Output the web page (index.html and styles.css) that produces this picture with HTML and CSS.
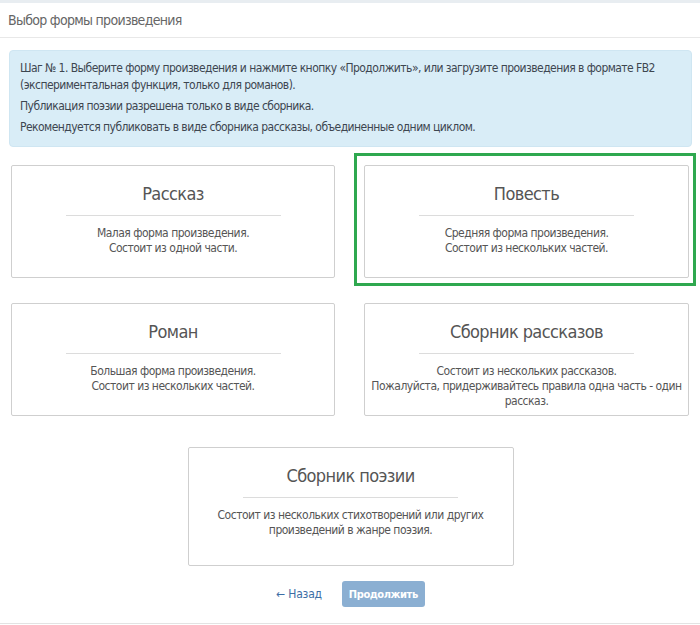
FILE: index.html
```html
<!DOCTYPE html>
<html lang="ru">
<head>
<meta charset="utf-8">
<title>Выбор формы произведения</title>
<link rel="stylesheet" href="styles.css">
</head>
<body>
<div class="topbar"></div>
<div class="panel">
  <div class="panel-heading">Выбор формы произведения</div>
  <div class="panel-body">
    <div class="alert">
      <p>Шаг № 1. Выберите форму произведения и нажмите кнопку «Продолжить», или загрузите произведения в формате FB2 (экспериментальная функция, только для романов).</p>
      <p>Публикация поэзии разрешена только в виде сборника.</p>
      <p>Рекомендуется публиковать в виде сборника рассказы, объединенные одним циклом.</p>
    </div>
    <div class="grid">
      <div class="card">
        <div class="card-title">Рассказ</div>
        <div class="card-rule"></div>
        <div class="card-text">Малая форма произведения.<br>Состоит из одной части.</div>
      </div>
      <div class="card selected">
        <div class="card-title">Повесть</div>
        <div class="card-rule"></div>
        <div class="card-text">Средняя форма произведения.<br>Состоит из нескольких частей.</div>
      </div>
      <div class="card">
        <div class="card-title">Роман</div>
        <div class="card-rule"></div>
        <div class="card-text">Большая форма произведения.<br>Состоит из нескольких частей.</div>
      </div>
      <div class="card">
        <div class="card-title">Сборник рассказов</div>
        <div class="card-rule"></div>
        <div class="card-text">Состоит из нескольких рассказов.<br>Пожалуйста, придерживайтесь правила одна часть - один рассказ.</div>
      </div>
    </div>
    <div class="single">
      <div class="card tall">
        <div class="card-title">Сборник поэзии</div>
        <div class="card-rule"></div>
        <div class="card-text">Состоит из нескольких стихотворений или других произведений в жанре поэзия.</div>
      </div>
    </div>
    <div class="actions">
      <a class="back" href="#">← Назад</a>
      <button class="btn" type="button">Продолжить</button>
    </div>
  </div>
</div>
</body>
</html>
```

FILE: styles.css
```css
html, body {
  margin: 0;
  padding: 0;
  background: #fff;
}
body {
  font-family: "DejaVu Sans Condensed", "DejaVu Sans", "Liberation Sans", sans-serif;
  color: #444;
  width: 700px;
  height: 625px;
  overflow: hidden;
}
.topbar {
  height: 3px;
  background: #e8edf1;
}
.panel {
  border-bottom: 1px solid #e3e3e3;
  height: 620px;
}
.panel-heading {
  height: 34px;
  line-height: 34px;
  padding-left: 8px;
  font-size: 14px;
  letter-spacing: -0.7px;
  color: #666;
  border-bottom: 1px solid #e8e8e8;
}
.panel-body {
  padding: 12px 8px 0 9px;
}
.alert {
  background: #d9edf7;
  border: 1px solid #cfe6f2;
  border-radius: 4px;
  padding: 9px 10px 6px 10px;
  font-size: 12px;
  letter-spacing: -0.55px;
  line-height: 17px;
  color: #3d4650;
}
.alert p {
  margin: 0 0 4px 0;
}
.grid {
  display: grid;
  grid-template-columns: 324px 325px;
  column-gap: 29px;
  row-gap: 25px;
  margin: 18px 0 0 2px;
}
.card {
  position: relative;
  border: 1px solid #cfcfcf;
  border-radius: 2px;
  background: #fff;
  min-height: 113px;
  box-sizing: border-box;
  padding: 16px 6px 6px;
  text-align: center;
  color: #555;
}
.card.tall {
  min-height: 119px;
}
.card.selected::after {
  content: "";
  position: absolute;
  left: -11px;
  right: -8px;
  top: -13px;
  bottom: -9px;
  border: 3px solid #2fa84f;
  pointer-events: none;
}
.card-title {
  font-size: 18px;
  letter-spacing: -0.6px;
  line-height: 24px;
  color: #555;
}
.card-rule {
  width: 215px;
  height: 1px;
  background: #dcdcdc;
  margin: 9px auto 10px;
}
.card-text {
  font-size: 12px;
  letter-spacing: -0.5px;
  line-height: 15px;
}
.single {
  display: flex;
  justify-content: center;
  margin-top: 31px;
}
.single .card {
  width: 326px;
}
.actions {
  display: flex;
  justify-content: center;
  align-items: center;
  gap: 20px;
  margin-top: 15px;
}
.back {
  font-size: 12px;
  letter-spacing: -0.2px;
  color: #3c6ea5;
  text-decoration: none;
}
.btn {
  font-family: inherit;
  font-size: 11px;
  letter-spacing: -0.4px;
  font-weight: bold;
  color: #fff;
  background: #8bafd2;
  border: none;
  border-radius: 3px;
  height: 26px;
  width: 83px;
  padding: 0;
}
```
